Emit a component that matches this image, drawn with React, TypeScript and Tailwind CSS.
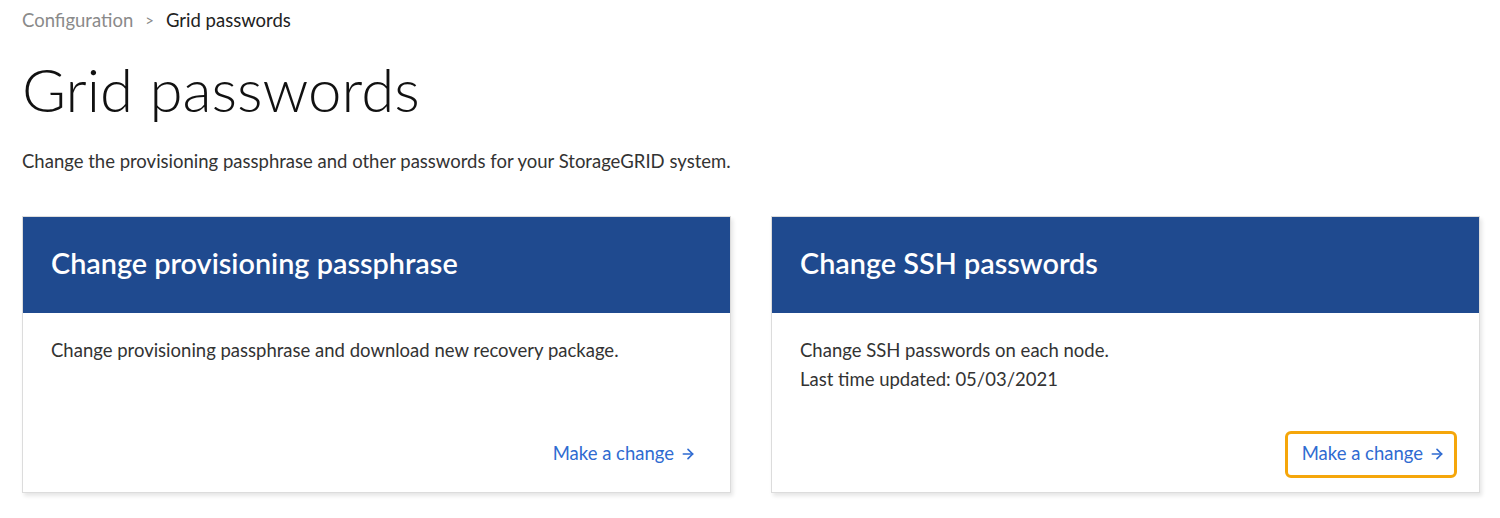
import { ArrowRight } from 'lucide-react';

type CardProps = {
  title: string;
  lines: string[];
  focused?: boolean;
};

function PasswordCard({ title, lines, focused }: CardProps) {
  return (
    <div className="flex-1 border border-[#dcdcdc] bg-white shadow-[2px_3px_4px_rgba(0,0,0,0.10)]">
      {/* Blue header */}
      <div className="h-[96px] bg-[#1f4a8f] flex items-center px-[28px] pb-[3px]">
        <h2 className="text-white text-[28.8px] font-semibold leading-none">{title}</h2>
      </div>

      {/* Body */}
      <div className="h-[179px] flex flex-col px-[28px] pt-[23px] pb-[14px]">
        <div className="text-[18.5px] leading-[29px] text-[#333333]">
          {lines.map((line) => (
            <p key={line}>{line}</p>
          ))}
        </div>
        <div className="mt-auto flex justify-end -mr-[6px]">
          <button
            className={
              'flex items-center gap-[6px] h-[47px] pl-[14px] pr-[9px] pb-[2px] rounded-[6px] border-[3px] text-[18.5px] text-[#2f6bd1] ' +
              (focused ? 'border-[#f5a60a]' : 'border-transparent')
            }
          >
            Make a change
            <ArrowRight size={16} strokeWidth={2.5} />
          </button>
        </div>
      </div>
    </div>
  );
}

export default function App() {
  return (
    <div className="min-h-[518px] bg-white px-[22px] pr-[20px] font-['Lato',sans-serif]">
      {/* Breadcrumb */}
      <nav className="pt-[8px] flex items-center gap-[12px] text-[18.5px] leading-[24px]">
        <span className="text-[#8a8a8a]">Configuration</span>
        <span className="text-[#8a8a8a] text-[15px]">&gt;</span>
        <span className="text-[#222222]">Grid passwords</span>
      </nav>

      <h1 className="mt-[22px] text-[60px] leading-[70px] font-light text-[#111111]">Grid passwords</h1>

      <p className="mt-[25px] text-[18.5px] leading-[24px] text-[#333333]">
        Change the provisioning passphrase and other passwords for your StorageGRID system.
      </p>

      <div className="mt-[43px] flex gap-[40px]">
        <PasswordCard
          title="Change provisioning passphrase"
          lines={['Change provisioning passphrase and download new recovery package.']}
        />
        <PasswordCard
          title="Change SSH passwords"
          lines={['Change SSH passwords on each node.', 'Last time updated: 05/03/2021']}
          focused
        />
      </div>
    </div>
  );
}
